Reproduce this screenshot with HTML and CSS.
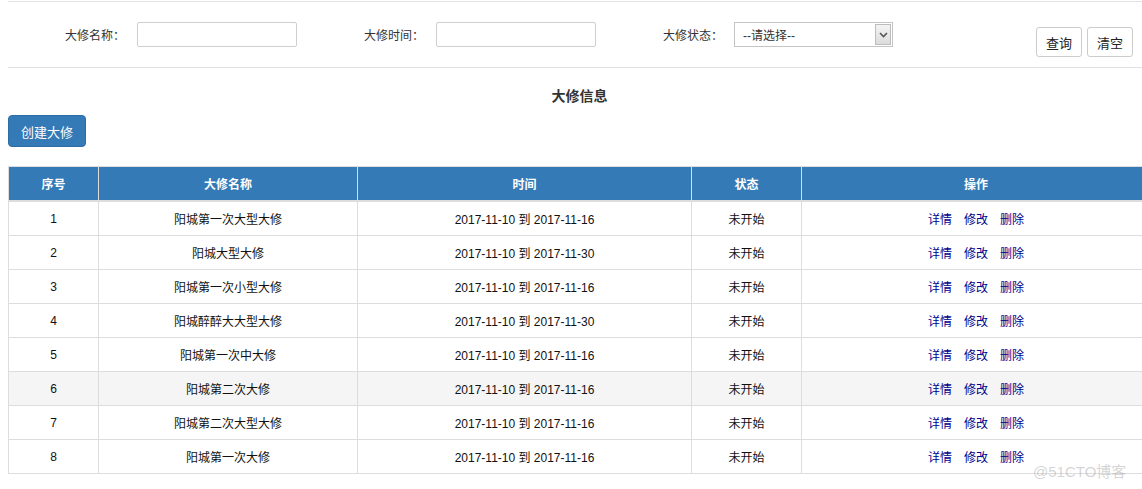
FILE: index.html
```html
<!DOCTYPE html>
<html lang="zh-CN">
<head>
    <meta charset="UTF-8">
    <title>大修信息</title>
    <link rel="stylesheet" href="styles.css">
</head>
<body>
    <div class="page">
        <!-- Поиск -->
        <div class="search-bar">
            <div class="field">
                <label>大修名称：</label>
                <input type="text" class="text-input">
            </div>
            <div class="field">
                <label>大修时间：</label>
                <input type="text" class="text-input">
            </div>
            <div class="field">
                <label>大修状态：</label>
                <div class="select-box">
                    <span class="select-text">--请选择--</span>
                    <span class="select-arrow">
                        <svg width="9" height="6" viewBox="0 0 9 6"><path d="M1 1 L4.5 4.5 L8 1" fill="none" stroke="#555" stroke-width="1.6"/></svg>
                    </span>
                </div>
            </div>
            <div class="search-buttons">
                <button class="btn-plain">查询</button>
                <button class="btn-plain">清空</button>
            </div>
        </div>

        <h3 class="title">大修信息</h3>

        <button class="btn-primary">创建大修</button>

        <table class="data-table">
            <thead>
                <tr>
                    <th class="col-no">序号</th>
                    <th class="col-name">大修名称</th>
                    <th class="col-time">时间</th>
                    <th class="col-state">状态</th>
                    <th>操作</th>
                </tr>
            </thead>
            <tbody id="rows"></tbody>
        </table>
    </div>

    <div class="watermark">@51CTO博客</div>

    <script>
        // Данные таблицы
        const items = [
            ['阳城第一次大型大修', '2017-11-16'],
            ['阳城大型大修', '2017-11-30'],
            ['阳城第一次小型大修', '2017-11-16'],
            ['阳城醉醉大大型大修', '2017-11-30'],
            ['阳城第一次中大修', '2017-11-16'],
            ['阳城第二次大修', '2017-11-16'],
            ['阳城第二次大型大修', '2017-11-16'],
            ['阳城第一次大修', '2017-11-16']
        ];

        const tbody = document.getElementById('rows');
        items.forEach((item, i) => {
            const tr = document.createElement('tr');
            if (i === 5) tr.className = 'hover';
            tr.innerHTML = `
                <td>${i + 1}</td>
                <td>${item[0]}</td>
                <td>2017-11-10 到 ${item[1]}</td>
                <td>未开始</td>
                <td class="actions"><a href="#">详情</a><a href="#">修改</a><a href="#">删除</a></td>`;
            tbody.appendChild(tr);
        });
    </script>
</body>
</html>
```

FILE: styles.css
```css
html, body {
    margin: 0;
    overflow: hidden;
}

body {
    font-family: 'Liberation Sans', 'Noto Sans CJK SC', sans-serif;
    font-size: 12px;
    color: #111;
    background: #fff;
}

.page {
    padding: 1px 0 0 8px;
    width: 1143px;
}

/* Панель поиска */
.search-bar {
    display: flex;
    align-items: flex-start;
    height: 65px;
    border-top: 1px solid #e2e2e2;
    border-bottom: 1px solid #e2e2e2;
    margin-right: -20px;
}

.field {
    display: flex;
    align-items: center;
    width: 299px;
    margin-top: 20px;
}

.field label {
    width: 129px;
    padding-right: 12px;
    box-sizing: border-box;
    text-align: right;
    color: #333;
}

.text-input {
    width: 160px;
    height: 25px;
    box-sizing: border-box;
    border: 1px solid #cfcfcf;
    border-radius: 2px;
    margin: 0;
    padding: 0 6px;
}

.select-box {
    display: flex;
    align-items: center;
    width: 159px;
    height: 25px;
    box-sizing: border-box;
    border: 1px solid #c4c4c4;
    margin-left: -1px;
}

.select-text {
    flex: 1;
    padding-left: 8px;
    color: #333;
}

.select-arrow {
    display: flex;
    align-items: center;
    justify-content: center;
    width: 16px;
    height: 21px;
    margin-right: 1px;
    background: linear-gradient(#f4f4f4, #dcdcdc);
    border: 1px solid #bdbdbd;
    box-sizing: border-box;
}

.search-buttons {
    display: flex;
    gap: 5px;
    margin-left: 131px;
    margin-top: 25px;
}

.btn-plain {
    width: 46px;
    height: 30px;
    padding: 0;
    border: 1px solid #ccc;
    border-radius: 3px;
    background: #fff;
    font-family: inherit;
    font-size: 13px;
    color: #222;
}

/* Заголовок */
.title {
    margin: 18px 0 0;
    height: 20px;
    line-height: 20px;
    text-align: center;
    font-size: 14px;
    font-weight: bold;
    color: #333;
}

.btn-primary {
    display: block;
    margin-top: 9px;
    width: 78px;
    height: 32px;
    padding: 0;
    background: #337ab7;
    border: 1px solid #2e6da4;
    border-radius: 4px;
    color: #fff;
    font-family: inherit;
    font-size: 13px;
}

/* Таблица */
.data-table {
    margin-top: 19px;
    width: 1143px;
    border-collapse: collapse;
    table-layout: fixed;
}

.data-table th,
.data-table td {
    border: 1px solid #dddddd;
    text-align: center;
    padding: 0;
}

.data-table th {
    height: 33px;
    background: #337ab7;
    color: #fff;
    font-weight: bold;
    border-bottom: 2px solid #dddddd;
}

.data-table td {
    height: 33px;
}

.col-no { width: 89px; }
.col-name { width: 258px; }
.col-time { width: 333px; }
.col-state { width: 109px; }

.data-table tr.hover td {
    background: #f5f5f5;
}

.actions a {
    color: #00008b;
    text-decoration: none;
    margin: 0 6px;
}

.watermark {
    position: absolute;
    left: 1033px;
    top: 460px;
    font-size: 15px;
    color: rgba(160, 160, 160, 0.45);
}
```
